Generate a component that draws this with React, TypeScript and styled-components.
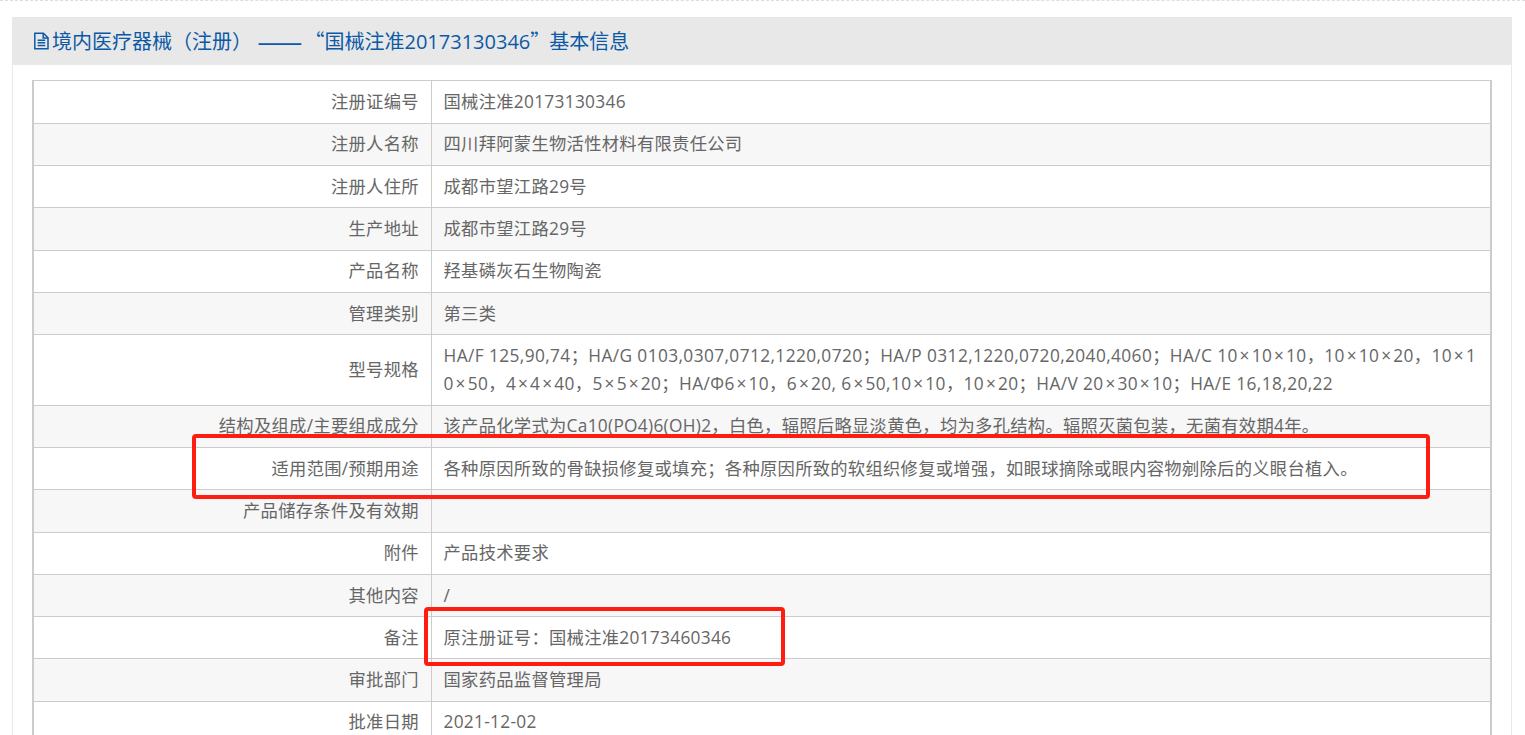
import React, { FC } from "react";
import styled, { createGlobalStyle } from "styled-components";

const GlobalStyle = createGlobalStyle`
  html, body {
    margin: 0;
    height: 735px;
    overflow: hidden;
    background: #fff;
    font-family: "Open Sans", "Noto Sans CJK SC", sans-serif;
  }
`;

const Page = styled.div`
  position: relative;
  height: 735px;
  overflow: hidden;
  padding: 17px 13px 0 12px;
  box-sizing: border-box;
`;

const TopRule = styled.div`
  position: absolute;
  top: 0;
  left: 0;
  right: 0;
  border-top: 1px dashed #ddd;
`;

const Panel = styled.section`
  border: 1px solid #e8e8f0;
  border-top: 0;
`;

const PanelTitle = styled.h3`
  display: flex;
  align-items: center;
  height: 47px;
  margin: 0 -1px;
  padding-left: 21px;
  background: #e8e8e8;
  border-bottom: 1px solid #e8e8f0;
  color: #0c5aa6;
  font-size: 20px;
  font-weight: 400;
  white-space: pre;
`;

const TitleIcon = styled.svg`
  width: 18px;
  height: 18px;
  margin-right: 1px;
  flex: none;
`;

// dash and quote marks come out full width in the CJK face
const Cjk = styled.span`
  font-family: "Noto Sans CJK SC", sans-serif;
`;

const Dash = styled(Cjk)`
  font-size: 27px;
  margin-right: 2px;
`;

const ClosingQuote = styled(Cjk)`
  margin-right: -1px;
`;

const TableWrap = styled.div`
  padding: 15.4px 19px 0;
`;

const InfoTable = styled.table`
  width: 100%;
  border-collapse: collapse;
  table-layout: fixed;
  font-size: 17.3px;
  letter-spacing: 0.3px;
  line-height: 28.3px;
  color: #666;
`;

const Row = styled.tr<{ $striped: boolean }>`
  background: ${(p) => (p.$striped ? "#f7f7f7" : "#fff")};
`;

const Label = styled.td`
  width: 398px;
  padding: 6.8px 11.7px 6.2px 12px;
  border: 1px solid #ccc;
  border-left-width: 2px;
  text-align: right;
  box-sizing: border-box;
`;

const Value = styled.td<{ $spec: boolean }>`
  padding: 6.8px 12px 6.2px;
  border: 1px solid #ccc;
  border-right-width: 2px;
  letter-spacing: ${(p) => (p.$spec ? "0.4px" : "0.3px")};
`;

const Times = styled.span`
  padding: 0 1.8px;
`;

const Highlight = styled.div<{ $left: number; $top: number; $width: number; $height: number }>`
  position: absolute;
  left: ${(p) => p.$left}px;
  top: ${(p) => p.$top}px;
  width: ${(p) => p.$width}px;
  height: ${(p) => p.$height}px;
  box-sizing: border-box;
  border: 4px solid #fe1d10;
  border-radius: 4px;
`;

const rows: [string, string][] = [
  ["注册证编号", "国械注准20173130346"],
  ["注册人名称", "四川拜阿蒙生物活性材料有限责任公司"],
  ["注册人住所", "成都市望江路29号"],
  ["生产地址", "成都市望江路29号"],
  ["产品名称", "羟基磷灰石生物陶瓷"],
  ["管理类别", "第三类"],
  [
    "型号规格",
    "HA/F 125,90,74；HA/G 0103,0307,0712,1220,0720；HA/P 0312,1220,0720,2040,4060；HA/C 10×10×10，10×10×20，10×1\n0×50，4×4×40，5×5×20；HA/Φ6×10，6×20, 6×50,10×10，10×20；HA/V 20×30×10；HA/E 16,18,20,22",
  ],
  ["结构及组成/主要组成成分", "该产品化学式为Ca10(PO4)6(OH)2，白色，辐照后略显淡黄色，均为多孔结构。辐照灭菌包装，无菌有效期4年。"],
  ["适用范围/预期用途", "各种原因所致的骨缺损修复或填充；各种原因所致的软组织修复或增强，如眼球摘除或眼内容物剜除后的义眼台植入。"],
  ["产品储存条件及有效期", ""],
  ["附件", "产品技术要求"],
  ["其他内容", "/"],
  ["备注", "原注册证号：国械注准20173460346"],
  ["审批部门", "国家药品监督管理局"],
  ["批准日期", "2021-12-02"],
];

const withTimes = (text: string) =>
  text.split("\n").map((line, l) => (
    <React.Fragment key={l}>
      {l > 0 && <br />}
      {line.split("×").map((part, i) => (
        <React.Fragment key={i}>
          {i > 0 && <Times>×</Times>}
          {part}
        </React.Fragment>
      ))}
    </React.Fragment>
  ));

const App: FC = () => {
  return (
    <Page>
      <GlobalStyle />
      <TopRule />
      <Panel>
        <PanelTitle>
          <TitleIcon viewBox="0 0 18 18" fill="none" stroke="#0c5aa6" strokeWidth="1.5">
            <path d="M1.8 1.2h8.6l4.6 4.6v11H1.8z" />
            <path d="M10.2 1.2v4.8h4.8M4.6 8.2h7.6M4.6 10.8h7.6M4.6 13.4h7.6" />
          </TitleIcon>
          <span>境内医疗器械（注册） </span>
          <Dash>——</Dash>
          <Cjk>“</Cjk>
          <span>国械注准20173130346</span>
          <ClosingQuote>”</ClosingQuote>
          <span>基本信息</span>
        </PanelTitle>
        <TableWrap>
          <InfoTable>
            <tbody>
              {rows.map(([label, value], i) => (
                <Row key={label} $striped={i % 2 === 1}>
                  <Label>{label}</Label>
                  <Value $spec={value.includes("×")}>{withTimes(value)}</Value>
                </Row>
              ))}
            </tbody>
          </InfoTable>
        </TableWrap>
      </Panel>
      <Highlight $left={192} $top={434} $width={1238} $height={65} />
      <Highlight $left={424} $top={607} $width={361} $height={59} />
    </Page>
  );
};

export default App;
